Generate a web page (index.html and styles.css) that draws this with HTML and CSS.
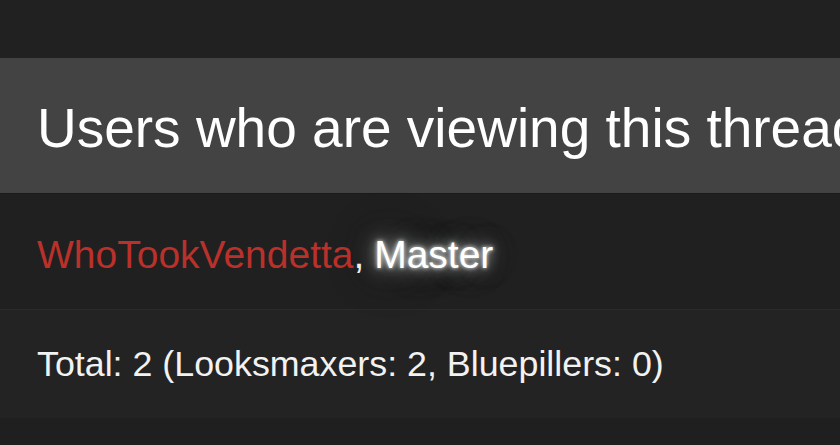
FILE: index.html
```html
<!DOCTYPE html>
<html lang="en">
<head>
<meta charset="utf-8">
<title>Users who are viewing this thread</title>
<link rel="stylesheet" href="styles.css">
</head>
<body>
  <div class="topbar"></div>
  <section class="block">
    <h3 class="block-header">Users who are viewing this thread</h3>
    <div class="block-row viewers">
      <a class="username staff" href="#">WhoTookVendetta</a>, <a class="username glow" href="#">Master</a>
    </div>
    <div class="block-row total">Total: 2 (Looksmaxers: 2, Bluepillers: 0)</div>
  </section>
</body>
</html>
```

FILE: styles.css
```css
html, body {
  margin: 0;
  padding: 0;
}

body {
  background: #1f1f1f;
  font-family: "Liberation Sans", Arial, sans-serif;
  color: #f2f2f2;
  overflow: hidden;
}

.topbar {
  height: 58px;
  background: #212121;
}

.block-header {
  margin: 0;
  height: 135px;
  box-sizing: border-box;
  padding: 4px 0 0 37px;
  display: flex;
  align-items: center;
  background: #434343;
  font-size: 55px;
  font-weight: normal;
  color: #ffffff;
  white-space: nowrap;
  overflow: hidden;
}

.block-row {
  padding-left: 37px;
  display: flex;
  align-items: center;
  white-space: nowrap;
}

.viewers {
  height: 117px;
  padding-top: 6px;
  font-size: 39px;
  background: #202020;
  border-top: 1px solid #1a1a1a;
  border-bottom: 1px solid #2b2b2b;
  box-sizing: border-box;
}

.total {
  height: 109px;
  font-size: 35.8px;
  background: #232323;
  border-bottom: 1px solid #202020;
  box-sizing: border-box;
}

.username {
  text-decoration: none;
  color: #f2f2f2;
}

.username.staff {
  color: #b9312a;
}

.username.glow {
  margin-left: 0.25em;
  color: #ffffff;
  text-shadow: 0 0 4px rgba(255, 255, 255, 0.9),
               0 0 12px rgba(255, 255, 255, 0.6),
               0 0 22px rgba(225, 235, 230, 0.5),
               0 0 40px rgba(180, 200, 195, 0.3),
               0 0 90px rgba(120, 150, 145, 0.25);
}
```
